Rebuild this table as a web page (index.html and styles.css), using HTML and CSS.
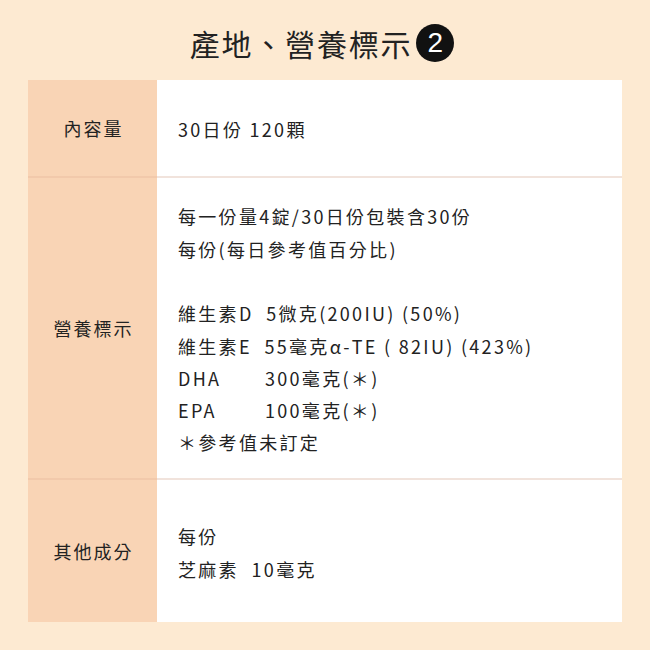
FILE: index.html
```html
<!DOCTYPE html>
<html lang="zh-Hant">
<head>
<meta charset="utf-8">
<link rel="stylesheet" href="styles.css">
</head>
<body>
<div class="page">
  <h1 class="title"><span class="title-text">產地、營養標示</span><span class="num">2</span></h1>
  <div class="table">
    <div class="row row1">
      <div class="label">內容量</div>
      <div class="content"><p>30日份 120顆</p></div>
    </div>
    <div class="row row2">
      <div class="label">營養標示</div>
      <div class="content">
        <p>每一份量4錠/30日份包裝含30份</p>
        <p>每份(每日參考值百分比)</p>
        <p>&nbsp;</p>
        <p>維生素D&nbsp; 5微克(200IU) (50%)</p>
        <p>維生素E&nbsp; 55毫克α-TE ( 82IU) (423%)</p>
        <p><span class="k">DHA</span>300毫克(＊)</p>
        <p><span class="k">EPA</span>100毫克(＊)</p>
        <p>＊參考值未訂定</p>
      </div>
    </div>
    <div class="row row3">
      <div class="label">其他成分</div>
      <div class="content">
        <p>每份</p>
        <p>芝麻素&nbsp; 10毫克</p>
      </div>
    </div>
  </div>
</div>
</body>
</html>
```
FILE: styles.css
```css
html, body {
  margin: 0;
  padding: 0;
  background: #fdead2;
}
body {
  font-family: "Noto Sans CJK TC", "Noto Sans", sans-serif;
  color: #222;
}
.page {
  width: 650px;
  height: 650px;
  box-sizing: border-box;
  padding: 0 28px;
}
.title {
  margin: 0;
  height: 80px;
  box-sizing: border-box;
  padding-top: 6px;
  padding-right: 6px;
  display: flex;
  align-items: center;
  justify-content: center;
  font-weight: 400;
  font-size: 30px;
  letter-spacing: 1.8px;
  color: #222;
}
.title-text {
  margin-right: 4px;
}
.num {
  width: 38px;
  height: 38px;
  border-radius: 50%;
  background: #111;
  color: #fff;
  display: inline-flex;
  align-items: center;
  justify-content: center;
  font-family: "Liberation Sans", Arial, sans-serif;
  font-size: 28px;
  letter-spacing: 0;
}
.table {
  display: flex;
  flex-direction: column;
  background: #fff;
}
.row {
  display: flex;
}
.row + .row {
  border-top: 2px solid #f1e3dc;
}
.row + .row .label {
  border-top: 2px solid #f2c9ab;
  margin-top: -2px;
}
.row1 { height: 96px; }
.row2 { height: 300px; }
.row3 { height: 142px; }
.label {
  width: 127px;
  flex: none;
  background: #f9d4b5;
  display: flex;
  align-items: center;
  justify-content: center;
  font-size: 18px;
  letter-spacing: 2px;
  padding-left: 2px;
}
.content {
  flex: 1;
  display: flex;
  flex-direction: column;
  justify-content: center;
  padding-left: 21px;
  padding-top: 3px;
  font-size: 18px;
  letter-spacing: 2.3px;
}
.content p {
  margin: 0;
  line-height: 32.3px;
  white-space: pre;
}
.k {
  display: inline-block;
  width: 87px;
}
```
